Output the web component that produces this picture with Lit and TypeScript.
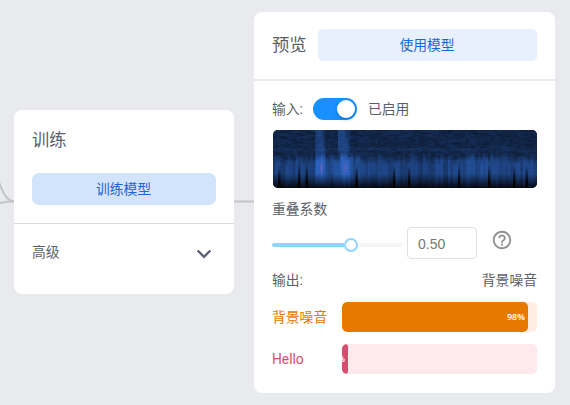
import { LitElement, html, css, svg } from "lit";
import { customElement, property } from "lit/decorators.js";

const clamp = (v: number) => Math.max(0, Math.min(1, v));

@customElement("spectrogram-view")
class SpectrogramView extends LitElement {
  static styles = css`
    :host { display: block; height: 58px; border-radius: 5px; overflow: hidden; background: #0c1c38; }
    canvas { display: block; width: 100%; height: 100%; }
  `;

  firstUpdated() {
    const canvas = this.renderRoot.querySelector("canvas") as HTMLCanvasElement;
    const ctx = canvas.getContext("2d")!;
    let seed = 4711;
    const rnd = () => {
      seed = (seed * 1664525 + 1013904223) >>> 0;
      return seed / 4294967296;
    };
    const cw = 2.5;
    const ch = 1.5;
    let previous: number[] = [];
    for (let i = 0; i * cw < 264; i++) {
      const x = i * cw;
      const column = rnd();
      const dip = rnd() < 0.06 ? 9 : rnd() * 2;
      // Loud moments show up as bright vertical streaks.
      const loudA = x >= 42 && x < 52;
      const loudB = x >= 64 && x < 77;
      const broad = Math.exp(-(((x - 214) / 24) ** 2)) * 0.1 + (x > 40 && x < 86 ? 0.08 : 0);
      const edge = 27 + rnd() * 5 - broad * 20;
      const current: number[] = [];
      for (let j = 0; j * ch < 58; j++) {
        const y = j * ch;
        // Neighbouring frames share most of their energy, which stretches the grain sideways.
        const grain = rnd() * 0.6 + (previous[j] ?? 0.5) * 0.4;
        current.push(grain);
        let v = (0.2 + grain * 0.2) * (1 - clamp((y - edge + 5) / 8));
        v += (0.42 + column * 0.15 + grain * 0.06 + broad) * clamp((y - edge + 5) / 8);
        if (y > 17 && y < 20) v += 0.05;
        if (loudA) v += y < 20 ? (x < 48 ? 0.22 : 0.12) : 0.22;
        if (loudB) v += Math.abs(x - 67 - y * 0.13) < 4.5 ? 0.25 : 0.12;
        v = clamp(Math.min(v, 0.82) * clamp((60 - dip - y) / 16));
        const hot = (loudA && x > 45 && x < 50) || (loudB && x > 69 && x < 74) ? Math.exp(-(((y - 37) / 5) ** 2)) * (loudA ? 50 : 28) : 0;
        ctx.fillStyle = `rgb(${Math.round(4 + v * 46 + hot)}, ${Math.round(v * 118 + 2)}, ${Math.round(v * 228 + 3)})`;
        ctx.fillRect(x, y, cw + 0.6, ch + 0.6);
      }
      previous = current;
    }
  }

  render() {
    return html`<canvas width="264" height="58"></canvas>`;
  }
}

@customElement("class-meter")
class ClassMeter extends LitElement {
  @property() label = "";
  @property() tone = "orange";
  @property({ type: Number }) value = 0;
  @property({ type: Number }) fill = 0;

  static styles = css`
    :host { display: flex; align-items: center; height: 30px; }
    .label { width: 70px; flex: none; white-space: nowrap; }
    .track { flex: 1; height: 30px; border-radius: 5px; overflow: hidden; }
    .fill {
      height: 100%; border-radius: 5px; overflow: hidden; box-sizing: border-box;
      display: flex; align-items: center; justify-content: flex-end; padding-right: 3px;
      color: #fff; font: 600 9px/12px "Open Sans", sans-serif;
    }
    .orange .label { color: #e67701; }
    .orange .track { background: #ffece2; }
    .orange .fill { background: #e87900; }
    .pink .label { color: #d84b6f; }
    .pink .track { background: #ffe9ec; }
    .pink .fill { background: #d84c6f; }
    .row { display: flex; align-items: center; width: 100%; }
  `;

  render() {
    return html`<div class="row ${this.tone}">
      <span class="label">${this.label}</span>
      <div class="track"><div class="fill" style="width:${this.fill}px"><span>${this.value}%</span></div></div>
    </div>`;
  }
}

@customElement("app-root")
class AppRoot extends LitElement {
  static styles = css`
    :host {
      display: block; position: relative; width: 570px; height: 405px; overflow: hidden;
      background: #e8eaed; color: #5b5f69;
      font: 13.8px/20px Roboto, "Noto Sans CJK SC", sans-serif;
    }
    .wires { position: absolute; left: 0; top: 0; }
    .board { position: relative; display: flex; align-items: flex-start; gap: 20px; padding-left: 14px; }
    .card { background: #fff; border-radius: 8px; box-sizing: border-box; }
    .train { width: 220px; height: 184px; margin-top: 110px; }
    .preview { width: 301px; height: 381px; margin-top: 11.5px; }
    h2 { margin: 0; font-size: 17.3px; line-height: 24px; font-weight: 400; }
    .btn {
      display: flex; align-items: center; justify-content: center; height: 32px; width: 100%;
      border: 0; padding: 0 1px 0 0; border-radius: 7px; color: #1967d2; background: #d2e3fc;
      font: inherit;
    }
    .train-top { padding: 18px; height: 113px; box-sizing: border-box; display: flex; flex-direction: column; justify-content: space-between; }
    .rule { height: 1px; background: #dadce0; }
    .advanced { display: flex; justify-content: space-between; align-items: center; padding: 18px 22px 0 18px; }
    .advanced svg { margin-top: 3px; }
    .head { display: flex; align-items: center; gap: 12px; height: 67px; padding: 0 18px; border-bottom: 2px solid #e8eaed; }
    .head h2 { flex: none; width: 34px; white-space: nowrap; }
    .head .btn { background: #e8f0fe; border-radius: 5px; }
    .body { padding: 17px 18px 0; }
    .input-row { display: flex; align-items: center; height: 22px; }
    .switch { width: 44px; height: 22px; border-radius: 11px; background: #1890ff; margin: 0 11px 0 10px; box-sizing: border-box; padding: 2px; display: flex; justify-content: flex-end; }
    .knob { width: 18px; height: 18px; border-radius: 50%; background: #fff; box-shadow: 0 2px 4px rgba(0, 35, 11, .2); }
    spectrogram-view { margin: 10px 0 11px 1px; }
    .slider-row { display: flex; align-items: center; height: 32px; margin-top: 8px; }
    .slider { width: 130px; height: 4px; border-radius: 2px; background: #f5f5f5; display: flex; align-items: center; margin-top: 4px; }
    .done { width: 72px; height: 4px; border-radius: 2px 0 0 2px; background: #91d5ff; }
    .handle { width: 14px; height: 14px; box-sizing: border-box; border: 2px solid #91d5ff; border-radius: 50%; background: #fff; }
    .number { width: 70px; height: 32px; box-sizing: border-box; border: 1px solid #dfe0e2; border-radius: 4px; margin-left: 5px; padding-left: 10px; font: 14px/32px "Liberation Sans", sans-serif; color: #777; }
    .help { margin: -5px 0 0 14px; display: block; }
    .output { display: flex; justify-content: space-between; margin: 11px 0 12px; }
    class-meter + class-meter { margin-top: 12px; }
  `;

  render() {
    return html`
      <svg class="wires" width="570" height="405" fill="none" stroke="#c2c4c8" stroke-width="2">
        ${svg`<path d="M-4 174 C1 188 5 201 14 201.3"/><path d="M-4 204 C1 202.5 6 201.5 14 201.5"/><path d="M230 201.5H258"/>`}
      </svg>
      <div class="board">
        <section class="card train">
          <div class="train-top">
            <h2>训练</h2>
            <button class="btn">训练模型</button>
          </div>
          <div class="rule"></div>
          <div class="advanced">
            <span>高级</span>
            <svg width="16" height="12" viewBox="0 0 16 12" fill="none" stroke="#5b6075" stroke-width="2.4"><path d="M1.700 2.500 8 8.800 14.300 2.500"/></svg>
          </div>
        </section>
        <section class="card preview">
          <div class="head">
            <h2>预览</h2>
            <button class="btn">使用模型</button>
          </div>
          <div class="body">
            <div class="input-row">
              <span>输入:</span>
              <div class="switch"><div class="knob"></div></div>
              <span>已启用</span>
            </div>
            <spectrogram-view></spectrogram-view>
            <div>重叠系数</div>
            <div class="slider-row">
              <div class="slider"><div class="done"></div><div class="handle"></div></div>
              <div class="number">0.50</div>
              <svg class="help" width="22" height="22" viewBox="0 0 24 24" fill="#909090"><path d="M11 18h2v-2h-2v2zm1-16C6.48 2 2 6.48 2 12s4.480 10 10 10 10-4.480 10-10S17.520 2 12 2zm0 18c-4.410 0-8-3.590-8-8s3.590-8 8-8 8 3.590 8 8-3.590 8-8 8zm0-14c-2.210 0-4 1.790-4 4h2c0-1.100.9-2 2-2s2 .9 2 2c0 2-3 1.750-3 5h2c0-2.250 3-2.500 3-5 0-2.210-1.790-4-4-4z"/></svg>
            </div>
            <div class="output"><span>输出:</span><span>背景噪音</span></div>
            <class-meter label="背景噪音" tone="orange" value="98" fill="186"></class-meter>
            <class-meter label="Hello" tone="pink" value="2" fill="6"></class-meter>
          </div>
        </section>
      </div>
    `;
  }
}
